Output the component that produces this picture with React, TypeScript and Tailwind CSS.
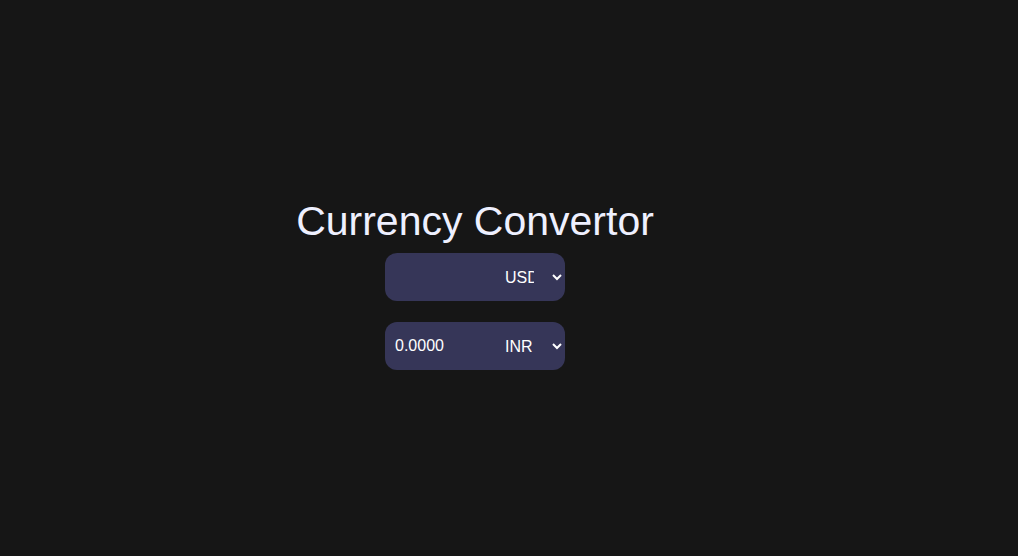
export default function App() {
  return (
    <div className="min-h-[556px] w-full bg-[#161616] font-['Liberation_Sans',Arial,sans-serif] text-[#eef0ff]">
      <div className="flex w-[950px] flex-col items-center pt-[197px]">
        {/* Title */}
        <h1 className="text-[41px] leading-[48px]">Currency Convertor</h1>

        {/* From */}
        <div className="mt-[8px] flex h-[48px] w-[180px] items-center rounded-xl bg-[#363658]">
          <input
            type="text"
            className="w-[116px] bg-transparent pl-[10px] text-[16px] text-white outline-none"
            defaultValue=""
          />
          <select
            defaultValue="USD"
            className="w-[64px] bg-transparent pl-0 pr-[15px] text-[16px] text-white outline-none"
          >
            <option className="bg-[#363658]" value="USD">USD</option>
            <option className="bg-[#363658]" value="INR">INR</option>
          </select>
        </div>

        {/* To */}
        <div className="mt-[21px] flex h-[48px] w-[180px] items-center rounded-xl bg-[#363658]">
          <input
            type="text"
            readOnly
            className="w-[116px] bg-transparent pl-[10px] text-[16px] text-white outline-none"
            defaultValue="0.0000"
          />
          <select
            defaultValue="INR"
            className="w-[64px] bg-transparent pl-0 pr-[15px] text-[16px] text-white outline-none"
          >
            <option className="bg-[#363658]" value="USD">USD</option>
            <option className="bg-[#363658]" value="INR">INR</option>
          </select>
        </div>
      </div>
    </div>
  );
}
